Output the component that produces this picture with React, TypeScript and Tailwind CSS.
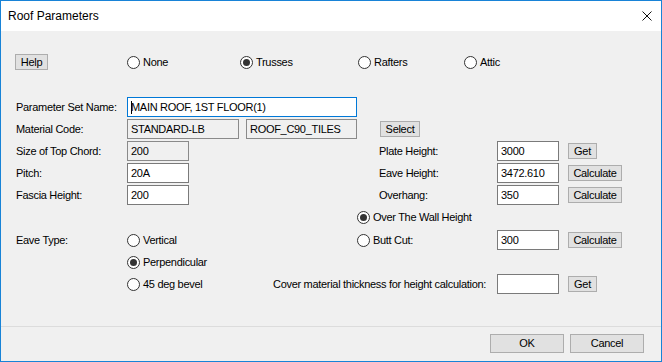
import React from "react"

const font = { fontFamily: '"Liberation Sans", Arial, sans-serif' }

function Radio({ label, checked = false }: { label: string; checked?: boolean }) {
  return (
    <div className="flex items-center">
      <span className="flex h-[13px] w-[13px] items-center justify-center rounded-full border border-[#333333] bg-white">
        {checked && <span className="h-[7px] w-[7px] rounded-full bg-[#333333]" />}
      </span>
      <span className="ml-[3px] whitespace-nowrap">{label}</span>
    </div>
  )
}

function Btn({ label, w }: { label: string; w: string }) {
  return (
    <div
      className={`flex h-[16px] items-center justify-center border border-[#adadad] bg-[#e1e1e1] leading-none ${w}`}
    >
      {label}
    </div>
  )
}

function Field({ value = "", w, readOnly = false, focused = false }: { value?: string; w: string; readOnly?: boolean; focused?: boolean }) {
  return (
    <div
      className={`flex h-[20px] items-center border pl-[3px] whitespace-nowrap ${w} ${
        focused ? "border-[#0078d7] bg-white" : readOnly ? "border-[#8a8a8a] bg-[#f0f0f0]" : "border-[#7a7a7a] bg-white"
      }`}
    >
      {focused && <span className="mr-[-1px] h-[13px] w-px bg-black" />}
      {value}
    </div>
  )
}

export default function App() {
  return (
    <div
      className="flex h-[362px] w-[662px] flex-col border border-[#1883d7] bg-[#f0f0f0] text-[11px] tracking-[-0.3px] text-black"
      style={font}
    >
      {/* title bar */}
      <div className="flex h-[30px] items-center justify-between bg-white pl-[7px] pr-[9px]">
        <span className="text-[12px] tracking-normal">Roof Parameters</span>
        <svg width="10" height="10" viewBox="0 0 10 10" className="mt-[-1px]">
          <path d="M0.5 0.5 L9.5 9.5 M9.5 0.5 L0.5 9.5" stroke="#111" strokeWidth="1" fill="none" />
        </svg>
      </div>

      {/* body */}
      <div className="flex h-[295px] flex-col pl-[14px]">
        <div className="mt-[23px] flex h-[16px] items-center">
          <div className="w-[112px]">
            <Btn label="Help" w="w-[33px]" />
          </div>
          <div className="w-[113px]">
            <Radio label="None" />
          </div>
          <div className="w-[118px]">
            <Radio label="Trusses" checked />
          </div>
          <div className="w-[106px]">
            <Radio label="Rafters" />
          </div>
          <Radio label="Attic" />
        </div>

        <div className="mt-[27px] flex flex-col gap-[2px]">
          <div className="flex h-[20px] items-center">
            <span className="w-[112px] pl-[1px]">Parameter Set Name:</span>
            <Field value="MAIN ROOF, 1ST FLOOR(1)" w="w-[230px]" focused />
          </div>
          <div className="flex h-[20px] items-center">
            <span className="w-[112px] pl-[1px]">Material Code:</span>
            <Field value="STANDARD-LB" w="w-[112px]" readOnly />
            <div className="ml-[7px]">
              <Field value="ROOF_C90_TILES" w="w-[111px]" readOnly />
            </div>
            <div className="ml-[23px]">
              <Btn label="Select" w="w-[40px]" />
            </div>
          </div>
          <div className="flex h-[20px] items-center">
            <span className="w-[112px] pl-[1px]">Size of Top Chord:</span>
            <Field value="200" w="w-[62px]" readOnly />
            <span className="ml-[190px] w-[118px]">Plate Height:</span>
            <Field value="3000" w="w-[62px]" />
            <div className="ml-[9px]">
              <Btn label="Get" w="w-[29px]" />
            </div>
          </div>
          <div className="flex h-[20px] items-center">
            <span className="w-[112px] pl-[1px]">Pitch:</span>
            <Field value="20A" w="w-[62px]" />
            <span className="ml-[190px] w-[118px]">Eave Height:</span>
            <Field value="3472.610" w="w-[62px]" />
            <div className="ml-[9px]">
              <Btn label="Calculate" w="w-[54px]" />
            </div>
          </div>
          <div className="flex h-[20px] items-center">
            <span className="w-[112px] pl-[1px]">Fascia Height:</span>
            <Field value="200" w="w-[62px]" />
            <span className="ml-[190px] w-[118px]">Overhang:</span>
            <Field value="350" w="w-[62px]" />
            <div className="ml-[9px]">
              <Btn label="Calculate" w="w-[54px]" />
            </div>
          </div>
        </div>

        <div className="mt-[2px] flex h-[20px] items-center pl-[342px]">
          <Radio label="Over The Wall Height" checked />
        </div>

        <div className="mt-[3px] flex h-[20px] items-center">
          <span className="w-[112px] pl-[1px]">Eave Type:</span>
          <div className="w-[230px]">
            <Radio label="Vertical" />
          </div>
          <div className="w-[140px]">
            <Radio label="Butt Cut:" />
          </div>
          <Field value="300" w="w-[62px]" />
          <div className="ml-[9px]">
            <Btn label="Calculate" w="w-[54px]" />
          </div>
        </div>

        <div className="mt-[2px] flex h-[20px] items-center pl-[112px]">
          <Radio label="Perpendicular" checked />
        </div>

        <div className="mt-[2px] flex h-[20px] items-center">
          <div className="w-[258px] pl-[112px]">
            <Radio label="45 deg bevel" />
          </div>
          <span className="w-[224px] whitespace-nowrap">Cover material thickness for height calculation:</span>
          <Field w="w-[62px]" />
          <div className="ml-[9px]">
            <Btn label="Get" w="w-[29px]" />
          </div>
        </div>
      </div>

      {/* footer */}
      <div className="flex h-[35px] justify-end gap-[6px] border-t border-[#dcdcdc] pr-[17px] pt-[7px]">
        <div className="flex h-[19px] w-[74px] items-center justify-center border border-[#adadad] bg-[#e1e1e1]">OK</div>
        <div className="flex h-[19px] w-[74px] items-center justify-center border border-[#adadad] bg-[#e1e1e1]">Cancel</div>
      </div>
    </div>
  )
}
